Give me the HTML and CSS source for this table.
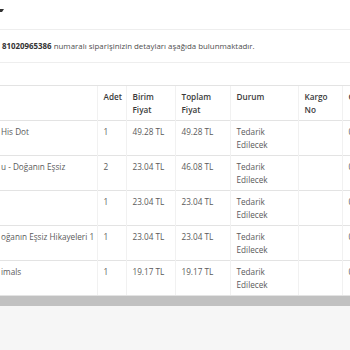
FILE: index.html
```html
<!DOCTYPE html>
<html lang="tr">
<head>
<meta charset="utf-8">
<link rel="stylesheet" href="styles.css">
</head>
<body>
<div class="page">
  <div class="top"><span class="caret"></span></div>
  <div class="notice"><b>81020965386</b>&nbsp;numaralı siparişinizin detayları aşağıda bulunmaktadır.</div>
  <div class="table-wrap">
    <table class="orders">
      <colgroup>
        <col class="c-name"><col class="c-qty"><col class="c-unit"><col class="c-total"><col class="c-status"><col class="c-cargo"><col class="c-last">
      </colgroup>
      <thead>
        <tr><th></th><th>Adet</th><th>Birim Fiyat</th><th>Toplam Fiyat</th><th>Durum</th><th>Kargo No</th><th>Ci Ad</th></tr>
      </thead>
      <tbody>
        <tr><td>His Dot</td><td>1</td><td>49.28 TL</td><td>49.28 TL</td><td>Tedarik Edilecek</td><td></td><td>0</td></tr>
        <tr><td>u - Doğanın Eşsiz</td><td>2</td><td>23.04 TL</td><td>46.08 TL</td><td>Tedarik Edilecek</td><td></td><td>0</td></tr>
        <tr><td></td><td>1</td><td>23.04 TL</td><td>23.04 TL</td><td>Tedarik Edilecek</td><td></td><td>0</td></tr>
        <tr><td>oğanın Eşsiz Hikayeleri 1</td><td>1</td><td>23.04 TL</td><td>23.04 TL</td><td>Tedarik Edilecek</td><td></td><td>0</td></tr>
        <tr><td>imals</td><td>1</td><td>19.17 TL</td><td>19.17 TL</td><td>Tedarik Edilecek</td><td></td><td>0</td></tr>
      </tbody>
    </table>
  </div>
  <div class="scrollbar"></div>
  <div class="footer"></div>
</div>
</body>
</html>
```
FILE: styles.css
```css
html, body {
  margin: 0;
  padding: 0;
  overflow: hidden;
  background: #fff;
}
body {
  font-family: "Open Sans", "DejaVu Sans", sans-serif;
  font-size: 8.2px;
  color: #5a5a5a;
  width: 350px;
  height: 350px;
}
.page {
  width: 350px;
  overflow: hidden;
}
.top {
  box-sizing: border-box;
  height: 30px;
  padding-top: 9px;
  border-bottom: 1px solid #eee;
}
.caret {
  display: block;
  width: 0;
  height: 0;
  border-left: 2px solid #333;
  border-right: 2px solid transparent;
  border-top: 3px solid #333;
}
.notice {
  height: 32px;
  border-bottom: 1px solid #eee;
  display: flex;
  align-items: center;
  padding-left: 2px;
  white-space: nowrap;
  color: #4f4f4f;
  font-size: 7.9px;
}
.notice b {
  color: #333;
  font-weight: 700;
}
.table-wrap {
  margin-top: 22px;
  margin-left: -4px;
  width: 420px;
}
.orders {
  border-collapse: collapse;
  table-layout: fixed;
  width: 420px;
}
.c-name { width: 101px; }
.c-qty { width: 29px; }
.c-unit { width: 49px; }
.c-total { width: 55px; }
.c-status { width: 68px; }
.c-cargo { width: 44px; }
.c-last { width: 74px; }
.orders th, .orders td {
  padding: 4px 5px 4px 6px;
  line-height: 13px;
  height: 26px;
  vertical-align: top;
  text-align: left;
  border-top: 1px solid #e3e3e3;
  border-left: 1px solid #f1f1f1;
  overflow: hidden;
}
.orders th:first-child, .orders td:first-child {
  border-left: none;
  white-space: nowrap;
  padding-left: 5px;
}
.orders th {
  color: #3a3a3a;
  font-weight: 600;
}
.orders tbody tr:last-child td {
  border-bottom: 1px solid #e3e3e3;
}
.scrollbar {
  height: 10px;
  background: #c1c1c1;
}
.footer {
  height: 60px;
  background: #f6f6f6;
}
```
